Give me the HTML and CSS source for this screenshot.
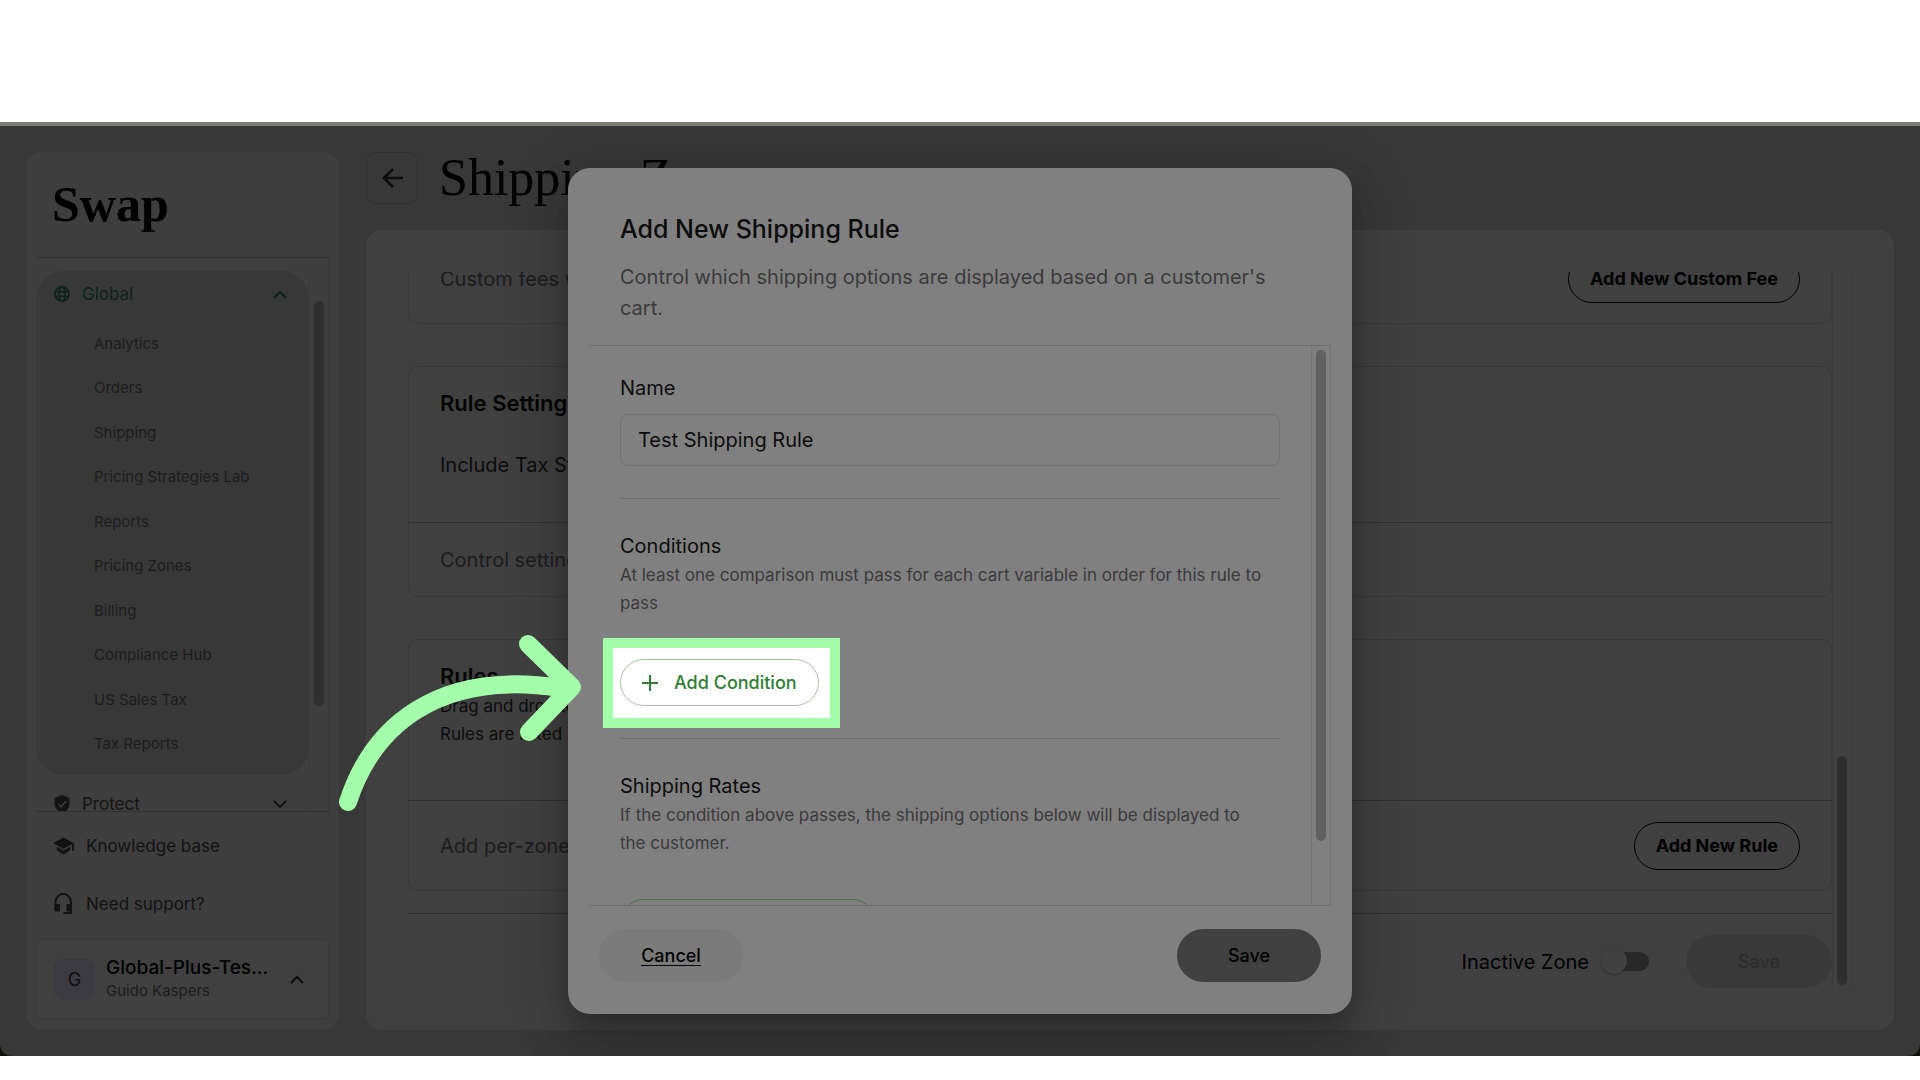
FILE: index.html
```html
<!DOCTYPE html>
<html lang="en">
<head>
    <meta charset="UTF-8">
    <meta name="viewport" content="width=device-width, initial-scale=1.0">
    <title>Swap - Shipping Zone</title>
    <link rel="stylesheet" href="styles.css">
</head>
<body>

<div class="window">
    <div class="app">

        <aside class="sidebar">
            <div class="logo">Swap</div>

            <div class="nav-scroll">
                <nav class="nav">
                    <div class="nav-group">
                        <button class="nav-header active" type="button">
                            <svg width="16" height="16" viewBox="0 0 16 16" fill="none" stroke="currentColor" stroke-width="1.7"><circle cx="8" cy="8" r="7.1"/><ellipse cx="8" cy="8" rx="3.2" ry="7.1"/><path d="M1.4 5.6h13.2M1.4 10.4h13.2"/></svg>
                            <span>Global</span>
                            <svg class="chevron" width="14" height="9" viewBox="0 0 14 9" fill="none" stroke="currentColor" stroke-width="2"><path d="M1 8l6-6 6 6"/></svg>
                        </button>
                        <ul>
                            <li><a href="#">Analytics</a></li>
                            <li><a href="#">Orders</a></li>
                            <li><a href="#">Shipping</a></li>
                            <li><a href="#">Pricing Strategies Lab</a></li>
                            <li><a href="#">Reports</a></li>
                            <li><a href="#">Pricing Zones</a></li>
                            <li><a href="#">Billing</a></li>
                            <li><a href="#">Compliance Hub</a></li>
                            <li><a href="#">US Sales Tax</a></li>
                            <li><a href="#">Tax Reports</a></li>
                        </ul>
                    </div>
                    <button class="nav-header protect" type="button">
                        <svg width="16" height="18" viewBox="0 0 16 18"><path fill="currentColor" d="M8 0l7.5 3v5.5c0 4.300-3 8-7.500 9.500C3.500 16.500.5 12.800.5 8.500V3z"/><path fill="none" stroke="#3e3e3e" stroke-width="1.600" d="M4.500 9l2.500 2.500 5-5.200"/></svg>
                        <span>Protect</span>
                        <svg class="chevron" width="14" height="9" viewBox="0 0 14 9" fill="none" stroke="currentColor" stroke-width="2"><path d="M1 1l6 6 6-6"/></svg>
                    </button>
                </nav>
                <div class="track"><div class="thumb"></div></div>
            </div>

            <div class="sidebar-bottom">
                <a class="help" href="#">
                    <svg width="21" height="18" viewBox="0 0 22 18" fill="currentColor"><path d="M11 0L0 6l11 6 9-4.900V14h2V6z"/><path d="M4 9.800v4L11 18l7-4.200v-4l-7 4z"/></svg>
                    <span>Knowledge base</span>
                </a>
                <a class="help" href="#">
                    <svg width="21" height="22" viewBox="0 0 21 22"><path fill="none" stroke="currentColor" stroke-width="2" d="M2.500 17V9.500a7.500 8.300 0 0 1 15.500 0V20H10.500"/><path fill="currentColor" d="M1.500 11H7v7.500H1.500zM13.500 11H19v7.500h-5.500z"/></svg>
                    <span>Need support?</span>
                </a>
                <button class="user" type="button">
                    <span class="avatar">G</span>
                    <span class="user-text">
                        <span class="store">Global-Plus-Tes...</span>
                        <span class="person">Guido Kaspers</span>
                    </span>
                    <svg width="14" height="9" viewBox="0 0 14 9" fill="none" stroke="currentColor" stroke-width="2"><path d="M1 8l6-6 6 6"/></svg>
                </button>
            </div>
        </aside>

        <main class="main">
            <div class="page-header">
                <button class="back" type="button" aria-label="Back">
                    <svg width="21" height="20" viewBox="0 0 21 20" fill="none" stroke="currentColor" stroke-width="2.500"><path d="M11 1L2 10l9 9M2 10h19"/></svg>
                </button>
                <h1>Shipping Zone</h1>
            </div>

            <div class="panel">
                <div class="panel-content">
                    <section class="card">
                        <div class="card-foot tall">
                            <p>Custom fees will be applied</p>
                            <button class="btn-outline" type="button">Add New Custom Fee</button>
                        </div>
                    </section>

                    <section class="card">
                        <div class="card-body">
                            <h2>Rule Settings</h2>
                            <p class="setting">Include Tax Strategy</p>
                        </div>
                        <div class="card-foot">
                            <p>Control settings for rules</p>
                        </div>
                    </section>

                    <section class="card">
                        <div class="card-body rules">
                            <h2>Rules</h2>
                            <p class="hint">Drag and drop to reorder.<br>Rules are listed in order.</p>
                        </div>
                        <div class="card-foot tall">
                            <p>Add per-zone rules</p>
                            <button class="btn-outline" type="button">Add New Rule</button>
                        </div>
                    </section>

                    <div class="panel-foot">
                        <label for="zoneActive">Inactive Zone</label>
                        <input type="checkbox" id="zoneActive" class="switch">
                        <button class="zone-save" type="button" disabled>Save</button>
                    </div>
                </div>
                <div class="track"><div class="thumb"></div></div>
            </div>
        </main>

        <div class="overlay">
            <div class="modal" role="dialog" aria-labelledby="modalTitle">
                <div class="modal-head">
                    <h2 id="modalTitle">Add New Shipping Rule</h2>
                    <p>Control which shipping options are displayed based on a customer's cart.</p>
                </div>

                <div class="modal-body">
                    <div class="modal-content">
                        <div class="field">
                            <label for="ruleName">Name</label>
                            <input type="text" id="ruleName" value="Test Shipping Rule">
                        </div>
                        <section class="modal-section">
                            <h3>Conditions</h3>
                            <p>At least one comparison must pass for each cart variable in order for this rule to pass</p>
                            <div class="spot">
                                <button class="btn-green" type="button">
                                    <svg width="16" height="16" viewBox="0 0 16 16" fill="none" stroke="currentColor" stroke-width="2"><path d="M8 0v16M0 8h16"/></svg>
                                    Add Condition
                                </button>
                            </div>
                        </section>
                        <section class="modal-section">
                            <h3>Shipping Rates</h3>
                            <p>If the condition above passes, the shipping options below will be displayed to the customer.</p>
                            <button class="btn-green dim" type="button">
                                <svg width="16" height="16" viewBox="0 0 16 16" fill="none" stroke="currentColor" stroke-width="2"><path d="M8 0v16M0 8h16"/></svg>
                                Add Shipping Rate
                            </button>
                        </section>
                    </div>
                    <div class="track"><div class="thumb"></div></div>
                </div>

                <div class="modal-foot">
                    <button class="cancel" type="button">Cancel</button>
                    <button class="save" type="button">Save</button>
                </div>

                <svg class="arrow" width="245" height="180" viewBox="338 632 245 180" fill="none" stroke="#a3ffa9" stroke-width="18" stroke-linecap="round" stroke-linejoin="round">
                    <path d="M348 802C372 728 436 669 560 688"/>
                    <path d="M528 644l44 43-43 45"/>
                </svg>
            </div>
        </div>

    </div>
</div>

</body>
</html>
```
FILE: styles.css
```css
* {
    box-sizing: border-box;
}
body {
    margin: 0;
    font-family: Inter, "Liberation Sans", sans-serif;
    background-color: #ffffff;
    color: #0c0c0c;
}
h1, h2, h3, p, ul {
    margin: 0;
    padding: 0;
    font-weight: 400;
}
ul {
    list-style: none;
}
a {
    color: inherit;
    text-decoration: none;
}
button, input {
    font-family: inherit;
    color: inherit;
    margin: 0;
}
button {
    background: none;
    border: none;
    cursor: pointer;
}
svg {
    flex: none;
}
.window {
    height: 100vh;
    padding: 122px 0 24px;
    background: linear-gradient(#ffffff 50%, #10100c 50%) no-repeat;
    background-clip: content-box;
}
.app {
    position: relative;
    height: 100%;
    display: flex;
    gap: 27px;
    padding: 26px;
    border-top: 4px solid #7b7d76;
    border-radius: 0 0 12px 12px;
    background-color: #383838;
    overflow: hidden;
}

/* scrollbars */
.track {
    flex: none;
    width: 20px;
    padding: 3px 4px;
    border: solid #3a3a3a;
    border-width: 0 1px;
}
.thumb {
    height: 100%;
    border-radius: 5px;
    background-color: #2f2f2f;
}

/* sidebar */
.sidebar {
    flex: none;
    width: 313px;
    display: flex;
    flex-direction: column;
    padding: 0 10px 11px;
    border-radius: 16px;
    background-color: #3e3e3e;
}
.logo {
    height: 106px;
    padding: 22px 16px;
    border-bottom: 1px solid #303030;
    font: bold 50px/60px "Liberation Serif", serif;
    color: #000000;
}
.nav-scroll {
    flex: 1;
    min-height: 0;
    display: flex;
}
.nav {
    flex: 1;
    overflow: hidden;
    padding-top: 13px;
}
.nav-group {
    height: 504px;
    padding-bottom: 9px;
    border-radius: 28px;
    background-color: #383838;
    display: flex;
    flex-direction: column;
}
.nav-header {
    flex: none;
    width: 100%;
    height: 46px;
    display: flex;
    align-items: center;
    gap: 12px;
    padding: 0 22px 0 18px;
    font-size: 17px;
    color: #141414;
}
.nav-header.active {
    color: #0a2419;
}
.nav-header.protect {
    margin-top: 6px;
}
.chevron {
    margin-left: auto;
}
.nav-group ul {
    flex: 1;
    margin-top: 4px;
    padding-left: 58px;
    display: flex;
    flex-direction: column;
}
.nav-group li {
    flex: 1;
    display: flex;
    align-items: center;
    font-size: 15px;
    color: #1c1c1c;
}
.sidebar .thumb {
    height: 405px;
    margin-top: 40px;
}
.sidebar-bottom {
    border-top: 1px solid #303030;
    padding-top: 5px;
}
.help {
    display: flex;
    align-items: center;
    gap: 12px;
    height: 58px;
    padding-left: 17px;
    font-size: 17px;
    color: #121212;
}
.user {
    width: 100%;
    height: 80px;
    margin-top: 6px;
    padding: 0 24px 0 17px;
    display: flex;
    align-items: center;
    gap: 11px;
    border: 1px solid #393939;
    border-radius: 6px;
    background-color: #404040;
    text-align: left;
}
.avatar {
    width: 41px;
    height: 41px;
    border-radius: 9px;
    background-color: #3b3a40;
    font-size: 18px;
    line-height: 41px;
    text-align: center;
}
.user-text {
    flex: 1;
    display: flex;
    flex-direction: column;
}
.store {
    font-size: 19px;
    line-height: 24px;
    font-weight: 500;
    color: #000000;
    white-space: nowrap;
}
.person {
    font-size: 15px;
    line-height: 22px;
    color: #1c1c1c;
}

/* page */
.main {
    flex: 1;
    min-width: 0;
    display: flex;
    flex-direction: column;
    gap: 27px;
}
.page-header {
    display: flex;
    align-items: center;
    gap: 21px;
    height: 51px;
}
.back {
    width: 52px;
    height: 52px;
    border: 1px solid #303030;
    border-radius: 10px;
    display: flex;
    align-items: center;
    justify-content: center;
}
.page-header h1 {
    font: 52px/60px "Liberation Serif", serif;
    color: #000000;
}
.panel {
    flex: 1;
    min-height: 0;
    display: flex;
    padding: 42px;
    border-radius: 16px;
    background-color: #404040;
}
.panel-content {
    flex: 1;
    display: flex;
    flex-direction: column;
    justify-content: flex-end;
    overflow: hidden;
}
.panel .track {
    display: flex;
    flex-direction: column;
    justify-content: flex-end;
}
.panel .thumb {
    height: 229px;
}
.card {
    flex: none;
    margin-bottom: 42px;
    border: 1px solid #383838;
    border-radius: 10px;
}
.card:nth-child(3) {
    margin-bottom: 22px;
}
.card-body {
    height: 155px;
    padding: 20px 31px;
}
.card-body.rules {
    height: 160px;
}
.card h2 {
    font-size: 22px;
    line-height: 32px;
    font-weight: 600;
    color: #050505;
}
.setting {
    margin-top: 32px;
    font-size: 20px;
    line-height: 28px;
}
.hint {
    font-size: 17px;
    line-height: 28px;
}
.card-foot {
    display: flex;
    align-items: center;
    justify-content: space-between;
    height: 74px;
    padding: 0 31px;
    border-top: 1px solid #303030;
    font-size: 20px;
    color: #1c1c1c;
}
.card-foot.tall {
    height: 90px;
}
.btn-outline {
    height: 48px;
    padding: 0 21px;
    border: 1px solid #000000;
    border-radius: 24px;
    font-size: 18px;
    font-weight: 700;
    color: #000000;
}
.panel-foot {
    flex: none;
    display: flex;
    align-items: center;
    justify-content: flex-end;
    padding-top: 21px;
    border-top: 1px solid #303030;
    font-size: 20px;
    color: #000000;
}
.switch {
    appearance: none;
    position: relative;
    width: 36px;
    height: 19px;
    margin: 0 37px 0 24px;
    border-radius: 10px;
    background-color: #282828;
}
.switch::before {
    content: "";
    position: absolute;
    left: -12px;
    top: -4px;
    width: 26px;
    height: 26px;
    border-radius: 50%;
    background-color: #404040;
    box-shadow: 0 1px 2px rgba(0,0,0,0.3);
}
.zone-save {
    width: 146px;
    height: 53px;
    border-radius: 27px;
    background-color: #393939;
    font-size: 18px;
    font-weight: 500;
    color: #2c2c2c;
}

/* modal */
.overlay {
    position: absolute;
    inset: 0;
    display: flex;
    justify-content: center;
    padding: 42px 0;
}
.modal {
    position: relative;
    width: 784px;
    max-width: 90%;
    display: flex;
    flex-direction: column;
    border-radius: 22px;
    background-color: #808080;
    box-shadow: 0 14px 19px -9px rgba(0,0,0,0.2), 0 30px 48px 4px rgba(0,0,0,0.14), 0 11px 58px 10px rgba(0,0,0,0.12);
}
.modal-head {
    margin: 0 21px;
    padding: 46px 31px 21px;
    border-bottom: 1px solid #6e6e6e;
}
.modal-head h2 {
    font-size: 25px;
    line-height: 30px;
    font-weight: 500;
}
.modal-head p {
    margin-top: 18px;
    font-size: 20px;
    line-height: 31px;
    color: #3a3a3a;
}
.modal-body {
    flex: 1;
    min-height: 0;
    display: flex;
    margin: 0 21px;
}
.modal-content {
    flex: 1;
    padding: 28px 31px;
    overflow: hidden;
}
.modal .track {
    border-color: #757575;
    padding: 4px;
}
.modal .thumb {
    height: 491px;
    background-color: #606060;
}
.field {
    display: flex;
    flex-direction: column;
    gap: 12px;
    padding-bottom: 32px;
    font-size: 20px;
    line-height: 28px;
}
.field input {
    width: 100%;
    height: 52px;
    padding: 0 17px;
    border: 1px solid #727272;
    border-radius: 8px;
    background: none;
    font-size: 20px;
}
.modal-section {
    padding: 33px 0 32px;
    border-top: 1px solid #6e6e6e;
}
.modal-section h3 {
    font-size: 20px;
    line-height: 28px;
}
.modal-section p {
    max-width: 645px;
    margin: 1px 0 42px;
    font-size: 17px;
    line-height: 28px;
    color: #3a3a3a;
}
.btn-green {
    display: flex;
    align-items: center;
    gap: 16px;
    height: 47px;
    padding: 0 21px;
    border: 1px solid #a0c4a2;
    border-radius: 24px;
    background: none;
    font-size: 18px;
    font-weight: 500;
    color: #2e7d32;
}
.btn-green.dim {
    min-width: 256px;
    border-color: #4c6e50;
    color: #17401a;
}
.spot {
    position: relative;
    z-index: 0;
    width: max-content;
}
/* highlighted box behind the button */
.spot::before {
    content: "";
    position: absolute;
    z-index: -1;
    inset: -21px -21px -22px -17px;
    border: 10px solid #a3ffa9;
    background-color: #ffffff;
}
.modal-foot {
    display: flex;
    justify-content: space-between;
    margin: 0 21px;
    padding: 23px 10px 32px;
    border-top: 1px solid #6e6e6e;
}
.modal-foot button {
    width: 144px;
    height: 53px;
    border-radius: 27px;
    font-size: 18px;
    font-weight: 500;
    color: #000000;
}
.modal-foot .cancel {
    background-color: #7b7b7b;
    text-decoration: underline;
    text-underline-offset: 3px;
}
.modal-foot .save {
    background-color: #404040;
}
.arrow {
    position: absolute;
    left: -230px;
    top: 464px;
}
```
